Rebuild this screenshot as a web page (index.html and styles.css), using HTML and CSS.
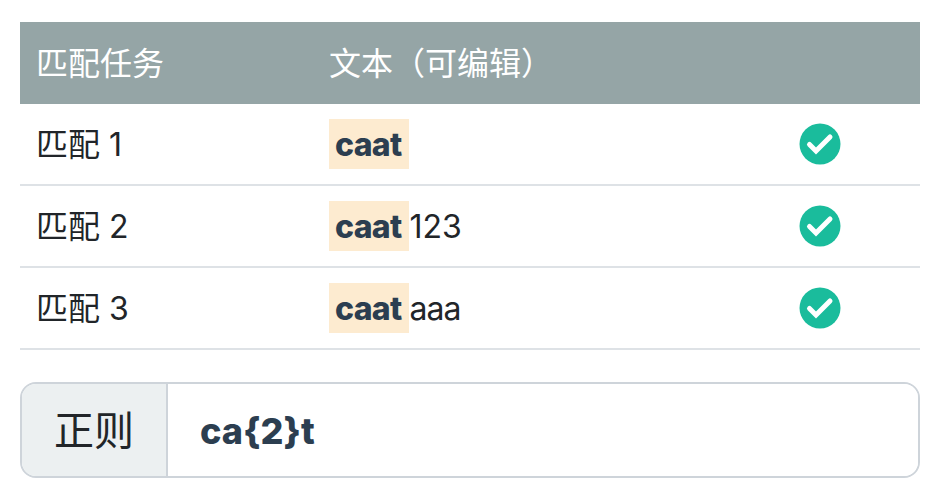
FILE: index.html
```html
<!DOCTYPE html>
<html lang="zh-CN">
<head>
    <meta charset="UTF-8">
    <title>正则匹配</title>
    <link rel="stylesheet" href="styles.css">
</head>
<body>
    <table class="match-table">
        <thead>
            <tr>
                <th class="col-name">匹配任务</th>
                <th>文本（可编辑）</th>
                <th class="col-check"></th>
            </tr>
        </thead>
        <tbody>
            <tr>
                <td>匹配 1</td>
                <td><span class="hit">caat</span></td>
                <td class="col-check"><svg class="check" viewBox="0 0 42 42"><circle cx="21" cy="21" r="20.5"/><path d="M10.5 21.5l6.5 6.5 14-14"/></svg></td>
            </tr>
            <tr>
                <td>匹配 2</td>
                <td><span class="hit">caat</span>123</td>
                <td class="col-check"><svg class="check" viewBox="0 0 42 42"><circle cx="21" cy="21" r="20.5"/><path d="M10.5 21.5l6.5 6.5 14-14"/></svg></td>
            </tr>
            <tr>
                <td>匹配 3</td>
                <td><span class="hit">caat</span><span class="tail">aaa</span></td>
                <td class="col-check"><svg class="check" viewBox="0 0 42 42"><circle cx="21" cy="21" r="20.5"/><path d="M10.5 21.5l6.5 6.5 14-14"/></svg></td>
            </tr>
        </tbody>
    </table>

    <div class="regex-group">
        <span class="regex-label">正则</span>
        <input class="regex-input" type="text" value="ca{2}t">
    </div>
</body>
</html>
```

FILE: styles.css
```css
* { margin: 0; padding: 0; box-sizing: border-box; }
body { background: #fff; padding: 22px 22px 0 20px; color: #212529; font-family: Inter, "Noto Sans CJK SC", sans-serif; font-size: 32px; }
.match-table { width: 900px; border-collapse: separate; border-spacing: 0; table-layout: fixed; }
.match-table th { height: 82px; padding: 0 16px 4px; background: #95a5a6; color: #fff; font-weight: 400; text-align: left; }
.match-table td { height: 82px; padding: 2px 16px 0; border-bottom: 2px solid #dee2e6; line-height: 48px; }
.col-name { width: 293px; }
.col-check { width: 200px; }
.match-table td.col-check { padding: 0 0 0 79px; }
.hit { padding: 6px 8px 5px 6px; background: #fdebd0; color: #2c3e50; font-weight: 800; letter-spacing: -0.7px; }
.tail { letter-spacing: -1px; }
.check { display: block; width: 42px; height: 42px; }
.check circle { fill: #1abc9c; }
.check path { fill: none; stroke: #fff; stroke-width: 5; stroke-linecap: round; stroke-linejoin: miter; }
.regex-group { display: flex; width: 900px; height: 96px; margin-top: 32px; border: 2px solid #ced4da; border-radius: 16px; overflow: hidden; }
.regex-label { display: flex; align-items: center; justify-content: center; width: 146px; padding-bottom: 4px; background: #ecf0f1; border-right: 2px solid #ced4da; font-size: 40px; }
.regex-input { flex: 1; border: none; outline: none; padding: 2px 32px 0; color: #2c3e50; font-family: Inter, sans-serif; font-size: 36px; font-weight: 800; }
```
